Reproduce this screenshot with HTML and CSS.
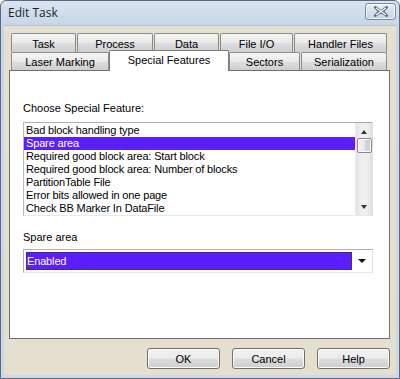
FILE: index.html
```html
<!DOCTYPE html>
<html>
<head>
<meta charset="utf-8">
<link rel="stylesheet" href="styles.css">
</head>
<body>
<div class="window">
  <div class="titlebar">
    <span class="title">Edit Task</span>
    <button class="close" aria-label="Close">
      <svg width="16" height="11" viewBox="0 0 16 11">
        <path d="M2.5 1.5 L6.5 5.5 L2.5 9.5 M13.5 1.5 L9.5 5.5 L13.5 9.5 M2.5 1.5 L13.5 9.5 M13.5 1.5 L2.5 9.5" fill="none" stroke="#5c6a7c" stroke-width="2.6" stroke-linecap="square"/>
        <path d="M3 2 L13 9 M13 2 L3 9" fill="none" stroke="#ffffff" stroke-width="1.2"/>
      </svg>
    </button>
  </div>
  <div class="client">
    <div class="tabs">
      <div class="tabrow">
        <div class="tab w-task">Task</div>
        <div class="tab w-process">Process</div>
        <div class="tab w-data">Data</div>
        <div class="tab w-fileio">File I/O</div>
        <div class="tab w-handler">Handler Files</div>
      </div>
      <div class="tabrow">
        <div class="tab w-laser">Laser Marking</div>
        <div class="tab active w-special">Special Features</div>
        <div class="tab w-sectors">Sectors</div>
        <div class="tab w-serial">Serialization</div>
      </div>
    </div>
    <div class="panel">
      <div class="label first">Choose Special Feature:</div>
      <div class="listbox">
        <ul class="items">
          <li>Bad block handling type</li>
          <li class="sel">Spare area</li>
          <li>Required good block area: Start block</li>
          <li>Required good block area: Number of blocks</li>
          <li>PartitionTable File</li>
          <li>Error bits allowed in one page</li>
          <li>Check BB Marker In DataFile</li>
        </ul>
        <div class="scrollbar">
          <div class="arrow up"></div>
          <div class="thumb"></div>
          <div class="track"></div>
          <div class="arrow down"></div>
        </div>
      </div>
      <div class="label second">Spare area</div>
      <div class="combo">
        <div class="combo-value">Enabled</div>
        <div class="combo-arrow"></div>
      </div>
    </div>
    <div class="buttons">
      <button class="btn">OK</button>
      <button class="btn">Cancel</button>
      <button class="btn">Help</button>
    </div>
  </div>
</div>
</body>
</html>
```
FILE: styles.css
```css
* { box-sizing: border-box; }
html, body { margin: 0; padding: 0; }
body { width: 400px; height: 379px; overflow: hidden; background: #ffffff; }

.window {
  width: 400px;
  height: 379px;
  border: 1px solid #5f6a78;
  border-radius: 6px 6px 0 0;
  background: linear-gradient(to bottom, #d9e4f1 0px, #c6d6e9 24px, #cbd9ea 100%);
  padding: 0 3px 3px 3px;
  display: flex;
  flex-direction: column;
  font-family: "Liberation Sans", Arial, sans-serif;
  font-size: 11px;
  color: #000;
}

.titlebar {
  height: 24px;
  display: flex;
  align-items: center;
  justify-content: space-between;
  padding: 0 0 0 4px;
}
.title {
  font-family: "Open Sans", "Liberation Sans", sans-serif;
  font-size: 12px;
  color: #1e1e1e;
  margin-top: -2px;
}
.close {
  width: 31px;
  height: 17px;
  margin-top: -3px;
  border: 1px solid #7f8b9b;
  border-radius: 3px;
  background: linear-gradient(to bottom, #e9eff6 0%, #d5dfeb 50%, #c8d5e5 100%);
  display: flex;
  align-items: center;
  justify-content: center;
  padding: 0;
  box-shadow: inset 0 0 0 1px rgba(255,255,255,0.6);
}

.client {
  flex: 1;
  background: #e4dfcf;
  border-top: 1px solid #b9c3cf;
  padding: 7px 6px 6px 5px;
  display: flex;
  flex-direction: column;
}

.tabs {
  display: flex;
  flex-direction: column;
  padding-left: 2px;
  position: relative;
  z-index: 2;
}
.tabrow {
  display: flex;
  height: 18px;
}
.tabrow:first-child { height: 19px; }

.tab {
  height: 100%;
  border: 1px solid #8c8c8c;
  border-bottom: none;
  border-radius: 2px 2px 0 0;
  background: linear-gradient(to bottom, #f4f4f4 0%, #ebebeb 45%, #dddddd 55%, #cfcfcf 100%);
  display: flex;
  align-items: center;
  justify-content: center;
  padding-top: 1px;
  white-space: nowrap;
  margin-right: 1px;
}
.tab.active {
  background: #ffffff;
  height: 21px;
  margin-top: -2px;
  margin-bottom: -1px;
  margin-right: 0;
  align-items: flex-start;
  padding-top: 3px;
  border-color: #7a7a7a;
  position: relative;
  z-index: 3;
}

.w-task { width: 65px; }
.w-process { width: 76px; }
.w-data { width: 65px; }
.w-fileio { width: 73px; }
.w-handler { width: 93px; }
.w-laser { width: 98px; margin-right: 0; }
.w-special { width: 120px; }
.w-sectors { width: 71px; }
.w-serial { width: 86px; }

.panel {
  height: 269px;
  background: #ffffff;
  border: 1px solid #6f6f6f;
  padding: 0 16px 0 13px;
  display: flex;
  flex-direction: column;
}

.label.first { margin-top: 31px; height: 13px; line-height: 13px; }
.label.second { margin-top: 15px; height: 13px; line-height: 13px; }

.listbox {
  margin-top: 7px;
  height: 94px;
  border: 1px solid #abadb3;
  border-left-color: #b6b9bf;
  border-right-color: #dbdfe6;
  border-bottom-color: #e3e9ef;
  display: flex;
}
.items {
  list-style: none;
  margin: 0;
  padding: 1px 0 0 0;
  flex: 1;
  overflow: hidden;
}
.items li {
  height: 13px;
  line-height: 13px;
  padding-left: 2px;
  white-space: nowrap;
  color: #000;
  letter-spacing: -0.15px;
}
.items li.sel {
  background: #5b1fff;
  color: #ffffff;
}

.scrollbar {
  width: 17px;
  background: linear-gradient(to right, #e4e4e4, #f0f0f0 40%, #eeeeee 70%, #e0e0e0);
  border-left: 1px solid #e9e9e9;
  display: flex;
  flex-direction: column;
  align-items: center;
}
.arrow {
  width: 0;
  height: 0;
  border-left: 3.5px solid transparent;
  border-right: 3.5px solid transparent;
}
.arrow.up {
  border-bottom: 4px solid #333;
  margin-top: 7px;
}
.arrow.down {
  border-top: 4px solid #333;
  margin-bottom: 6px;
}
.thumb {
  width: 15px;
  height: 15px;
  margin-top: 4px;
  border: 1px solid #8a8a8a;
  border-radius: 2px;
  background: linear-gradient(to right, #f4f4f4 0%, #e6e6e6 50%, #d4d4d4 51%, #cfcfcf 100%);
  box-shadow: inset 0 0 0 1px #fafafa;
}
.track { flex: 1; }

.combo {
  margin-top: 5px;
  height: 24px;
  border: 1px solid #abadb3;
  border-bottom-color: #e3e9ef;
  border-right-color: #dbdfe6;
  padding: 2px;
  display: flex;
  align-items: stretch;
}
.combo-value {
  width: 326px;
  background: #5b1fff;
  color: #ffffff;
  outline: 1px dotted #3a3a00;
  outline-offset: -1px;
  padding-left: 1px;
  line-height: 18px;
  letter-spacing: -0.15px;
}
.combo-arrow {
  flex: 1;
  display: flex;
  align-items: center;
  justify-content: center;
}
.combo-arrow::before {
  content: "";
  width: 0;
  height: 0;
  border-left: 4px solid transparent;
  border-right: 4px solid transparent;
  border-top: 4px solid #111;
  margin-left: 2px;
}

.buttons {
  display: flex;
  justify-content: flex-end;
  gap: 12px;
  margin-top: 9px;
  padding-right: 0;
}
.btn {
  width: 73px;
  height: 21px;
  border: 1px solid #707070;
  border-radius: 3px;
  background: linear-gradient(to bottom, #f2f2f2 0%, #ebebeb 48%, #dddddd 52%, #cfcfcf 100%);
  box-shadow: inset 0 0 0 1px #fbfbfb;
  font-family: "Liberation Sans", Arial, sans-serif;
  font-size: 11px;
  color: #000;
  padding: 0;
}
```
